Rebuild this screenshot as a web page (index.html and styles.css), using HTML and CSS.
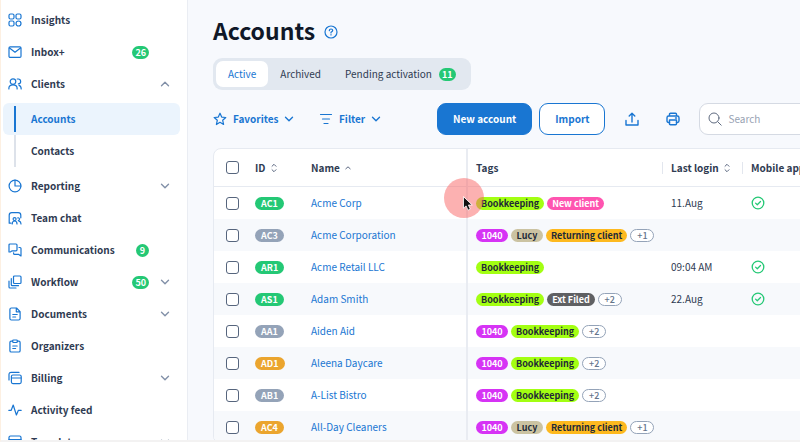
FILE: index.html
```
<!DOCTYPE html>
<html lang="en">
<head>
    <meta charset="UTF-8">
    <meta name="viewport" content="width=device-width, initial-scale=1.0">
    <title>Accounts</title>
    <link rel="stylesheet" href="styles.css">
</head>
<body>

    <!-- Shared icons -->
    <svg class="sprite" width="0" height="0">
        <symbol id="chevron" viewBox="0 0 10 10"><path d="M1.5 3.2 5 6.7l3.5-3.5"/></symbol>
        <symbol id="chevron-up" viewBox="0 0 10 10"><path d="M1.5 6.7 5 3.2l3.5 3.5"/></symbol>
        <symbol id="sort" viewBox="0 0 6 10"><path d="M1 3.3 3 1.3l2 2M1 6.7l2 2 2-2"/></symbol>
        <symbol id="sort-up" viewBox="0 0 6 10"><path d="M.8 5.8 3 3.8l2.2 2"/></symbol>
        <symbol id="check" viewBox="0 0 14 14"><circle cx="7" cy="7" r="5.8"/><path d="m4.6 7.1 1.7 1.6 3.2-3.2"/></symbol>
    </svg>

    <!-- Side Bar -->
    <nav class="sidebar">
        <a href="#" class="nav-item">
            <svg class="icon" viewBox="0 0 14 14"><rect x="1" y="1" width="5" height="5" rx="1.5"/><rect x="8" y="1" width="5" height="5" rx="1.5"/><rect x="1" y="8" width="5" height="5" rx="1.5"/><circle cx="10.5" cy="10.5" r="2.5"/></svg>
            <span class="label">Insights</span>
        </a>
        <a href="#" class="nav-item">
            <svg class="icon" viewBox="0 0 14 14"><rect x="1" y="1.8" width="12" height="10.6" rx="1.2"/><path d="m1.5 3 5.5 4.2L12.5 3"/></svg>
            <span class="label">Inbox+</span>
            <span class="count">26</span>
            <span class="arrow"></span>
        </a>
        <a href="#" class="nav-item">
            <svg class="icon" viewBox="0 0 14 14"><circle cx="5" cy="4.6" r="2.8"/><path d="M.9 12V11q0-3.2 4.1-3.2T9.1 11v1M9.2 2h.8a2.4 2.4 0 0 1 .4 4.9M11 8.4q2.2.7 2.2 3.6"/></svg>
            <span class="label">Clients</span>
            <svg class="arrow"><use href="#chevron-up"/></svg>
        </a>
        <div class="submenu">
            <a href="#" class="sub-item active">Accounts</a>
            <a href="#" class="sub-item">Contacts</a>
        </div>
        <a href="#" class="nav-item">
            <svg class="icon" viewBox="0 0 14 14"><circle cx="7" cy="7" r="5.9"/><path d="M7 1.1V7h5.9"/></svg>
            <span class="label">Reporting</span>
            <svg class="arrow"><use href="#chevron"/></svg>
        </a>
        <a href="#" class="nav-item">
            <svg class="icon" viewBox="0 0 14 14"><path d="M3 12.2H1.2V4.2q0-2.6 2.6-2.6h6.4q2.6 0 2.6 2.6v2.6"/><circle cx="6.6" cy="8.1" r="1.5"/><path d="M4.2 13q0-3 2.4-3t2.4 3M9.8 6.8a1.4 1.4 0 1 1 .5 2.8M11 10.2q2 .4 2 2.8"/></svg>
            <span class="label">Team chat</span>
        </a>
        <a href="#" class="nav-item">
            <svg class="icon" viewBox="0 0 14 14"><path d="M2.6 8.8 1 9V2q0-1 1-1h6q1 0 1 1v4.8q0 1-1 1H4.2zM11 4.5h1q1 0 1 1V13l-2.2-1.6H6.6q-1 0-1-1V9.8"/></svg>
            <span class="label">Communications</span>
            <span class="count">9</span>
            <span class="arrow"></span>
        </a>
        <a href="#" class="nav-item">
            <svg class="icon" viewBox="0 0 14 14"><rect x="5.5" y="1" width="7.5" height="7.5" rx="1"/><path d="M3.3 3.5v6.2q0 1 1 1h6.2M1 6v6q0 1 1 1h6"/></svg>
            <span class="label">Workflow</span>
            <span class="count">50</span>
            <svg class="arrow"><use href="#chevron"/></svg>
        </a>
        <a href="#" class="nav-item">
            <svg class="icon" viewBox="0 0 14 14"><path d="M8.5 1H3.4Q1.9 1 1.9 2.5v9q0 1.5 1.5 1.5h7.2q1.5 0 1.5-1.5V4.6zM8.3 1.3v3.5h3.5M4.8 7.5h4.4M4.8 10h2.8"/></svg>
            <span class="label">Documents</span>
            <svg class="arrow"><use href="#chevron"/></svg>
        </a>
        <a href="#" class="nav-item">
            <svg class="icon" viewBox="0 0 14 14"><path d="M4.6 2.2H3.2q-1.3 0-1.3 1.3v8.2q0 1.3 1.3 1.3h7.6q1.3 0 1.3-1.3V3.5q0-1.3-1.3-1.3H9.4"/><rect x="4.7" y="1" width="4.6" height="2.5" rx=".8"/><path d="M4.8 7h4.4M4.8 9.5h2.8"/></svg>
            <span class="label">Organizers</span>
        </a>
        <a href="#" class="nav-item">
            <svg class="icon" viewBox="0 0 14 14"><rect x="3.4" y="4" width="9.8" height="8.6" rx="1.5"/><path d="M3.6 7h9.4M1 9V3.6q0-2.2 2.2-2.2H11"/></svg>
            <span class="label">Billing</span>
            <svg class="arrow"><use href="#chevron"/></svg>
        </a>
        <a href="#" class="nav-item">
            <svg class="icon" viewBox="0 0 14 14"><path d="M.8 7.3h2.4L5.2 2l3.2 10 2-4.7h2.8"/></svg>
            <span class="label">Activity feed</span>
        </a>
        <a href="#" class="nav-item">
            <svg class="icon" viewBox="0 0 14 14"><rect x="1" y="1" width="12" height="12" rx="1.5"/><path d="M1 4.5h12M4.5 4.5V13"/></svg>
            <span class="label">Templates</span>
            <svg class="arrow"><use href="#chevron"/></svg>
        </a>
    </nav>

    <!-- Main Content -->
    <main class="content">
        <header class="page-title">
            <h1>Accounts</h1>
            <svg class="icon" viewBox="0 0 14 14"><circle cx="7" cy="7" r="6"/><path d="M5.3 5.6Q5.4 4 7 4t1.7 1.4Q8.7 6.3 7 7.2v.7M7 9.6v.4"/></svg>
        </header>

        <div class="tabs">
            <button class="tab selected">Active</button>
            <button class="tab">Archived</button>
            <button class="tab">Pending activation <span class="count">11</span></button>
        </div>

        <div class="toolbar">
            <button class="link-btn favorites">
                <svg class="icon" viewBox="0 0 14 14"><path d="m7 1.2 1.7 3.9 4.1.4-3.1 2.8.9 4.2L7 10.3l-3.6 2.2.9-4.2L1.2 5.5l4.1-.4z"/></svg>
                Favorites
                <svg class="arrow"><use href="#chevron"/></svg>
            </button>
            <button class="link-btn filter">
                <svg class="icon" viewBox="0 0 14 14"><path d="M1.5 2.5h11M3.5 7h7M5 11.5h4"/></svg>
                Filter
                <svg class="arrow"><use href="#chevron"/></svg>
            </button>
            <button class="btn primary">New account</button>
            <button class="btn">Import</button>
            <button class="icon-btn" aria-label="Export">
                <svg class="icon" viewBox="0 0 14 14"><path d="M1 8.5V13h12V8.5M7 10V1.5M4.2 4 7 1.3 9.8 4"/></svg>
            </button>
            <button class="icon-btn" aria-label="Print">
                <svg class="icon" viewBox="0 0 14 14"><path d="M3.5 4V2.3q0-1 1-1h5q1 0 1 1V4M3.5 10.5h-.8Q1 10.5 1 8.8V5.7Q1 4 2.7 4h8.6Q13 4 13 5.7v3.1q0 1.7-1.7 1.7h-.8"/><path d="M3.5 8h7v3.7q0 1-1 1h-5q-1 0-1-1zM9.5 6h1"/></svg>
            </button>
            <label class="search">
                <svg viewBox="0 0 14 14"><circle cx="6" cy="6" r="5"/><path d="m9.8 9.8 3.4 3.4"/></svg>
                <input type="text" placeholder="Search" aria-label="Search">
            </label>
        </div>

        <div class="table-card">
            <table>
                <colgroup>
                    <col class="col-check"><col class="col-id"><col class="col-name"><col class="col-tags"><col class="col-login"><col class="col-app">
                </colgroup>
                <thead>
                    <tr>
                        <th><input type="checkbox" aria-label="Select all"></th>
                        <th>ID <svg class="sort"><use href="#sort"/></svg></th>
                        <th>Name <svg class="sort"><use href="#sort-up"/></svg></th>
                        <th>Tags</th>
                        <th class="split">Last login <svg class="sort"><use href="#sort"/></svg></th>
                        <th class="split">Mobile app</th>
                    </tr>
                </thead>
                <tbody>
                    <tr>
                        <td><input type="checkbox" aria-label="Select Acme Corp"></td>
                        <td><span class="id green">AC1</span></td>
                        <td><a href="#">Acme Corp</a></td>
                        <td><div class="tags"><span class="tag lime">Bookkeeping</span><span class="tag pink">New client</span></div></td>
                        <td>11.Aug</td>
                        <td><svg class="check"><use href="#check"/></svg></td>
                    </tr>
                    <tr>
                        <td><input type="checkbox" aria-label="Select Acme Corporation"></td>
                        <td><span class="id gray">AC3</span></td>
                        <td><a href="#">Acme Corporation</a></td>
                        <td><div class="tags"><span class="tag purple">1040</span><span class="tag sand">Lucy</span><span class="tag amber">Returning client</span><span class="tag more">+1</span></div></td>
                        <td></td>
                        <td></td>
                    </tr>
                    <tr>
                        <td><input type="checkbox" aria-label="Select Acme Retail LLC"></td>
                        <td><span class="id green">AR1</span></td>
                        <td><a href="#">Acme Retail LLC</a></td>
                        <td><div class="tags"><span class="tag lime">Bookkeeping</span></div></td>
                        <td>09:04 AM</td>
                        <td><svg class="check"><use href="#check"/></svg></td>
                    </tr>
                    <tr>
                        <td><input type="checkbox" aria-label="Select Adam Smith"></td>
                        <td><span class="id green">AS1</span></td>
                        <td><a href="#">Adam Smith</a></td>
                        <td><div class="tags"><span class="tag lime">Bookkeeping</span><span class="tag dark">Ext Filed</span><span class="tag more">+2</span></div></td>
                        <td>22.Aug</td>
                        <td><svg class="check"><use href="#check"/></svg></td>
                    </tr>
                    <tr>
                        <td><input type="checkbox" aria-label="Select Aiden Aid"></td>
                        <td><span class="id gray">AA1</span></td>
                        <td><a href="#">Aiden Aid</a></td>
                        <td><div class="tags"><span class="tag purple">1040</span><span class="tag lime">Bookkeeping</span><span class="tag more">+2</span></div></td>
                        <td></td>
                        <td></td>
                    </tr>
                    <tr>
                        <td><input type="checkbox" aria-label="Select Aleena Daycare"></td>
                        <td><span class="id orange">AD1</span></td>
                        <td><a href="#">Aleena Daycare</a></td>
                        <td><div class="tags"><span class="tag purple">1040</span><span class="tag lime">Bookkeeping</span><span class="tag more">+2</span></div></td>
                        <td></td>
                        <td></td>
                    </tr>
                    <tr>
                        <td><input type="checkbox" aria-label="Select A-List Bistro"></td>
                        <td><span class="id gray">AB1</span></td>
                        <td><a href="#">A-List Bistro</a></td>
                        <td><div class="tags"><span class="tag purple">1040</span><span class="tag lime">Bookkeeping</span><span class="tag more">+2</span></div></td>
                        <td></td>
                        <td></td>
                    </tr>
                    <tr>
                        <td><input type="checkbox" aria-label="Select All-Day Cleaners"></td>
                        <td><span class="id orange">AC4</span></td>
                        <td><a href="#">All-Day Cleaners</a></td>
                        <td><div class="tags"><span class="tag purple">1040</span><span class="tag sand">Lucy</span><span class="tag amber">Returning client</span><span class="tag more">+1</span></div></td>
                        <td></td>
                        <td></td>
                    </tr>
                </tbody>
            </table>
        </div>
    </main>

    <!-- Mouse pointer with click highlight -->
    <svg class="pointer" viewBox="0 0 40 40">
        <circle cx="20" cy="20" r="20" fill="#fa6464" fill-opacity=".5"/>
        <path d="M19.5 19v11.2l2.6-2.3 1.9 4.3 2.3-1-1.9-4.2h3.5z" fill="#111" stroke="#fff" stroke-width=".8"/>
    </svg>

</body>
</html>
```

FILE: styles.css
```
* {
    margin: 0;
    padding: 0;
    box-sizing: border-box;
}

body {
    display: flex;
    height: 100vh;
    overflow: hidden;
    background: #f7f9fd;
    border-left: 1px solid #fdf0e2;
    border-bottom: 2px solid #f3f2f2;
    color: #2f3b52;
    font-family: "Noto Sans CJK JP", "Noto Sans", sans-serif;
    font-size: 10px;
    line-height: 16px;
}

a {
    color: inherit;
    text-decoration: none;
}

button,
input {
    font: inherit;
    color: inherit;
    border: none;
    background: none;
}

svg {
    fill: none;
    stroke: currentColor;
    stroke-linecap: round;
    stroke-linejoin: round;
    flex-shrink: 0;
}

.sprite {
    position: absolute;
}

.icon {
    width: 14px;
    height: 14px;
    color: #1976d2;
    stroke-width: 1.2;
}

.arrow {
    width: 10px;
    height: 10px;
    stroke-width: 1.4;
}

.count {
    height: 13px;
    min-width: 13px;
    padding: 0 3px;
    border-radius: 7px;
    background: #24c875;
    color: #fff;
    font-size: 9px;
    font-weight: 700;
    line-height: 13px;
    text-align: center;
}

/* Side bar */
.sidebar {
    width: 187px;
    flex-shrink: 0;
    padding: 4px 7px 0 2px;
    background: #fff;
    border-right: 1px solid #eaedf3;
    font-weight: 700;
    overflow: hidden;
}

.nav-item {
    display: flex;
    align-items: center;
    height: 32px;
    padding: 0 10px 0 5px;
}

.nav-item .label {
    flex: 1;
    margin-left: 9px;
}

.nav-item .arrow {
    margin-left: 11px;
    color: #8290a8;
}

.submenu {
    padding: 3px 0;
}

.sub-item {
    display: flex;
    align-items: center;
    height: 32px;
    padding-left: 11px;
    border-radius: 6px;
}

.sub-item::before {
    content: "";
    width: 2px;
    height: 32px;
    margin-right: 15px;
    background: #dde2ea;
}

.sub-item.active {
    background: #ebf4fd;
    color: #1976d2;
}

.sub-item.active::before {
    height: 26px;
    background: #1976d2;
}

/* Main content */
.content {
    flex: 1;
    min-width: 0;
    padding: 14px 0 0 25px;
    overflow: hidden;
}

.page-title {
    display: flex;
    align-items: center;
    gap: 9px;
    height: 32px;
}

h1 {
    color: #101828;
    font-size: 23px;
    font-weight: 700;
    line-height: 32px;
}

.page-title .icon {
    margin-top: 4px;
}

.tabs {
    display: inline-flex;
    margin-top: 12px;
    padding: 3px;
    border-radius: 9px;
    background: #e2e8f0;
    vertical-align: top;
}

.tab {
    display: flex;
    align-items: center;
    gap: 7px;
    height: 26px;
    padding: 0 12px;
    border-radius: 7px;
}

.tab.selected {
    background: #fff;
    color: #1976d2;
}

/* Toolbar */
.toolbar {
    display: flex;
    align-items: center;
    margin-top: 13px;
}

.toolbar > button {
    flex-shrink: 0;
}

.link-btn {
    display: flex;
    align-items: center;
    gap: 6px;
    color: #1976d2;
    font-weight: 700;
}

.favorites {
    width: 106px;
}

.filter {
    width: 118px;
}

.btn {
    height: 32px;
    padding: 0 15px;
    border: 1px solid #1976d2;
    border-radius: 9px;
    background: #fff;
    color: #1976d2;
    font-weight: 700;
    white-space: nowrap;
}

.btn.primary {
    margin-right: 7px;
    background: #1976d2;
    color: #fff;
}

.icon-btn {
    display: flex;
    margin-left: 13px;
    padding: 7px;
}

.icon-btn .icon {
    stroke-width: 1.4;
}

.search {
    display: flex;
    flex: 1 0 180px;
    align-items: center;
    gap: 6px;
    height: 32px;
    margin-left: 12px;
    padding: 0 8px;
    border: 1px solid #d5dae3;
    border-radius: 9px;
    background: #fff;
}

.search svg {
    width: 14px;
    height: 14px;
    color: #5f6b80;
}

.search input::placeholder {
    color: #98a2b3;
}

/* Accounts table */
.table-card {
    width: max-content;
    min-width: 100%;
    margin-top: 13px;
    border: 1px solid #e6eaf1;
    border-radius: 8px;
    background: #fff;
    overflow: hidden;
}

table {
    width: 680px;
    min-width: 100%;
    table-layout: fixed;
    border-collapse: separate;
    border-spacing: 0;
}

.col-check { width: 33px; }
.col-id { width: 56px; }
.col-name { width: 165px; }
.col-tags { width: 194px; }
.col-login { width: 80px; }

th,
td {
    height: 32px;
    padding-left: 8px;
    text-align: left;
    vertical-align: middle;
    white-space: nowrap;
}

th {
    height: 38px;
    border-bottom: 1px solid #e6eaf1;
    font-weight: 700;
}

th:first-child,
td:first-child {
    padding-left: 12px;
}

th:nth-child(3),
td:nth-child(3) {
    border-right: 2px solid #e9ecf2;
}

th:nth-child(n + 5),
td:nth-child(n + 5) {
    padding-left: 9px;
}

tbody tr:nth-child(even) {
    background: #f7f9fc;
}

td a {
    color: #1976d2;
}

.split {
    background: linear-gradient(#e2e6ee, #e2e6ee) left center / 1px 12px no-repeat;
}

.sort {
    width: 6px;
    height: 10px;
    margin-left: 3px;
    color: #5b6780;
    vertical-align: -1px;
}

input[type="checkbox"] {
    display: block;
    width: 13px;
    height: 13px;
    appearance: none;
    border: 1px solid #56657d;
    border-radius: 3px;
    background: #fff;
}

.check {
    display: block;
    width: 14px;
    height: 14px;
    color: #24c875;
    stroke-width: 1.3;
}

.id {
    display: block;
    width: max-content;
    padding: 0 6px;
    border-radius: 7px;
    color: #fff;
    font-size: 9px;
    font-weight: 700;
    line-height: 13px;
}

.tags {
    display: flex;
    gap: 3px;
}

.tag {
    min-width: 32px;
    padding: 0 5px;
    border-radius: 7px;
    color: #1f2a37;
    font-size: 9px;
    font-weight: 700;
    line-height: 13px;
    text-align: center;
}

.green { background: #24c875; }
.gray { background: #94a3b8; }
.orange { background: #eba52e; }

.lime { background: #a3ff12; }
.pink { background: #ff54b0; color: #fff; }
.purple { background: #d633f5; color: #fff; }
.sand { background: #cbc3a2; }
.amber { background: #fdb91f; }
.dark { background: #5f6063; color: #fff; }

.more {
    min-width: 24px;
    border: 1px solid #94a3b8;
    background: #fff;
    color: #64748b;
    font-weight: 500;
    line-height: 11px;
}

/* Pointer floats over the table */
.pointer {
    position: absolute;
    left: 444px;
    top: 178px;
    width: 40px;
    height: 40px;
    stroke: none;
}
```
